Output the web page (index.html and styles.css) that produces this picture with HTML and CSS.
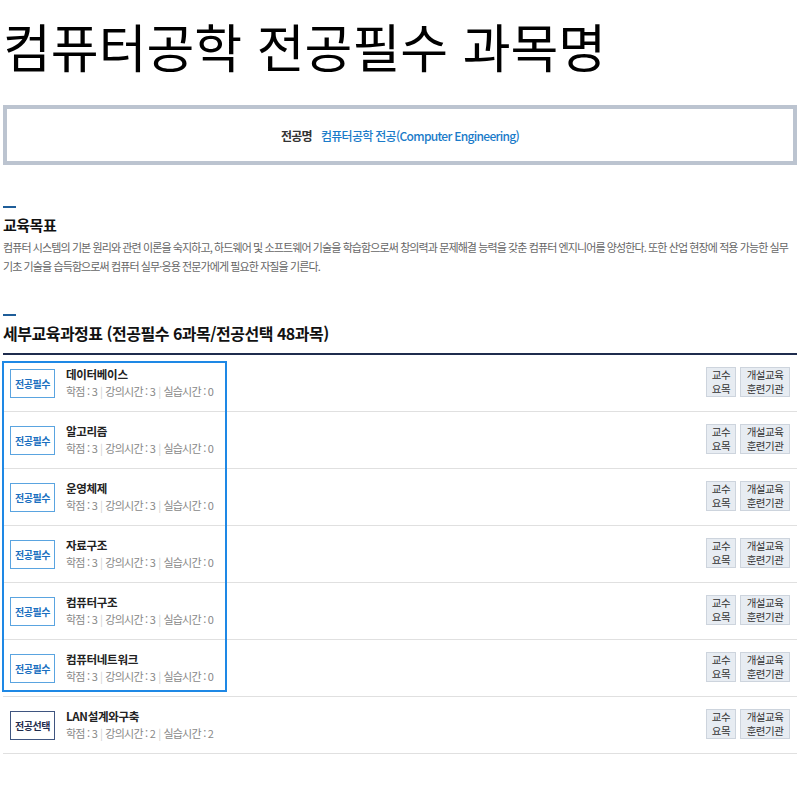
FILE: index.html
```html
<!DOCTYPE html>
<html lang="ko">
<head>
<meta charset="utf-8">
<title>컴퓨터공학 전공필수 과목명</title>
<link rel="stylesheet" href="styles.css">
</head>
<body>
<h1 class="title">컴퓨터공학 전공필수 과목명</h1>

<div class="major-box">
  <span class="major-label">전공명</span>
  <span class="major-name">컴퓨터공학 전공(Computer Engineering)</span>
</div>

<section class="section goal">
  <div class="bar"></div>
  <h2 class="sec-title">교육목표</h2>
  <p class="desc">컴퓨터 시스템의 기본 원리와 관련 이론을 숙지하고, 하드웨어 및 소프트웨어 기술을 학습함으로써 창의력과 문제해결 능력을 갖춘 컴퓨터 엔지니어를 양성한다. 또한 산업 현장에 적용 가능한 실무 기초 기술을 습득함으로써 컴퓨터 실무·응용 전문가에게 필요한 자질을 기른다.</p>
</section>

<section class="section curriculum">
  <div class="bar"></div>
  <h2 class="sec-title big">세부교육과정표 (전공필수 6과목/전공선택 48과목)</h2>
  <div class="list">
    <div class="highlight"></div>
    <div class="row">
      <span class="badge req">전공필수</span>
      <div class="info"><div class="name">데이터베이스</div><div class="meta">학점 : 3<i>|</i>강의시간 : 3<i>|</i>실습시간 : 0</div></div>
      <div class="btns"><span class="btn small">교수<br>요목</span><span class="btn">개설교육<br>훈련기관</span></div>
    </div>
    <div class="row">
      <span class="badge req">전공필수</span>
      <div class="info"><div class="name">알고리즘</div><div class="meta">학점 : 3<i>|</i>강의시간 : 3<i>|</i>실습시간 : 0</div></div>
      <div class="btns"><span class="btn small">교수<br>요목</span><span class="btn">개설교육<br>훈련기관</span></div>
    </div>
    <div class="row">
      <span class="badge req">전공필수</span>
      <div class="info"><div class="name">운영체제</div><div class="meta">학점 : 3<i>|</i>강의시간 : 3<i>|</i>실습시간 : 0</div></div>
      <div class="btns"><span class="btn small">교수<br>요목</span><span class="btn">개설교육<br>훈련기관</span></div>
    </div>
    <div class="row">
      <span class="badge req">전공필수</span>
      <div class="info"><div class="name">자료구조</div><div class="meta">학점 : 3<i>|</i>강의시간 : 3<i>|</i>실습시간 : 0</div></div>
      <div class="btns"><span class="btn small">교수<br>요목</span><span class="btn">개설교육<br>훈련기관</span></div>
    </div>
    <div class="row">
      <span class="badge req">전공필수</span>
      <div class="info"><div class="name">컴퓨터구조</div><div class="meta">학점 : 3<i>|</i>강의시간 : 3<i>|</i>실습시간 : 0</div></div>
      <div class="btns"><span class="btn small">교수<br>요목</span><span class="btn">개설교육<br>훈련기관</span></div>
    </div>
    <div class="row">
      <span class="badge req">전공필수</span>
      <div class="info"><div class="name">컴퓨터네트워크</div><div class="meta">학점 : 3<i>|</i>강의시간 : 3<i>|</i>실습시간 : 0</div></div>
      <div class="btns"><span class="btn small">교수<br>요목</span><span class="btn">개설교육<br>훈련기관</span></div>
    </div>
    <div class="row">
      <span class="badge elec">전공선택</span>
      <div class="info"><div class="name">LAN설계와구축</div><div class="meta">학점 : 3<i>|</i>강의시간 : 2<i>|</i>실습시간 : 2</div></div>
      <div class="btns"><span class="btn small">교수<br>요목</span><span class="btn">개설교육<br>훈련기관</span></div>
    </div>
  </div>
</section>
</body>
</html>
```

FILE: styles.css
```css
html, body {
  margin: 0;
  padding: 0;
  background: #fff;
}
body {
  padding: 0 3px;
  font-family: "Noto Sans CJK KR", "Noto Sans", sans-serif;
  color: #222;
}
.title {
  margin: 0;
  padding-top: 12px;
  font-size: 52px;
  font-weight: 400;
  line-height: 68px;
  letter-spacing: 0;
  color: #000;
  white-space: nowrap;
}
.major-box {
  margin-top: 25px;
  height: 52px;
  border: 4px solid #bcc4d0;
  display: flex;
  align-items: center;
  justify-content: center;
  gap: 9px;
  font-size: 12px;
  letter-spacing: -0.7px;
}
.major-label {
  font-weight: 700;
  color: #333;
}
.major-name {
  color: #1a7bc9;
  font-weight: 500;
}
.section {
  display: flex;
  flex-direction: column;
}
.goal {
  margin-top: 41px;
}
.bar {
  width: 13px;
  height: 2px;
  background: #1f5d99;
}
.sec-title {
  margin: 6px 0 0;
  font-size: 15px;
  font-weight: 700;
  line-height: 22px;
  color: #111;
  letter-spacing: -0.5px;
}
.sec-title.big {
  font-size: 16px;
  margin-top: 5px;
  line-height: 24px;
}
.desc {
  margin: 2px 0 0;
  font-size: 11px;
  line-height: 19px;
  color: #666;
  letter-spacing: -0.9px;
}
.curriculum {
  margin-top: 38px;
}
.list {
  position: relative;
  margin-top: 8px;
  border-top: 2px solid #1f2c4d;
}
.highlight {
  position: absolute;
  left: -1px;
  top: 6px;
  width: 221px;
  height: 327px;
  border: 2px solid #1e88e5;
  pointer-events: none;
}
.row {
  height: 56px;
  border-bottom: 1px solid #e0e0e0;
  display: flex;
  align-items: center;
  padding: 0 7px;
}
.badge {
  width: 43px;
  height: 27px;
  display: flex;
  align-items: center;
  justify-content: center;
  font-size: 10px;
  font-weight: 700;
  letter-spacing: -0.5px;
  flex: none;
}
.badge.req {
  border: 1px solid #5aa4e0;
  color: #1a6fc0;
}
.badge.elec {
  border: 1px solid #3f5580;
  color: #1f2c4d;
}
.info {
  margin-left: 11px;
  display: flex;
  flex-direction: column;
  gap: 1px;
  margin-top: -2px;
}
.name {
  font-size: 11.5px;
  font-weight: 700;
  color: #222;
  line-height: 16px;
  letter-spacing: -0.3px;
}
.meta {
  font-size: 11px;
  color: #888;
  line-height: 16px;
  letter-spacing: -0.75px;
}
.meta i {
  font-style: normal;
  color: #d0d0d0;
  margin: 0 3px;
}
.btns {
  margin-left: auto;
  display: flex;
  gap: 4px;
  margin-top: -2px;
}
.btn {
  background: #e7ecf2;
  border: 1px solid #cdd4dd;
  font-size: 10.5px;
  line-height: 14px;
  color: #333;
  text-align: center;
  padding: 0;
  width: 50px;
  box-sizing: border-box;
  height: 30px;
  display: flex;
  align-items: center;
  justify-content: center;
  letter-spacing: -0.5px;
  white-space: nowrap;
}
.btn.small {
  width: 30px;
}
```
